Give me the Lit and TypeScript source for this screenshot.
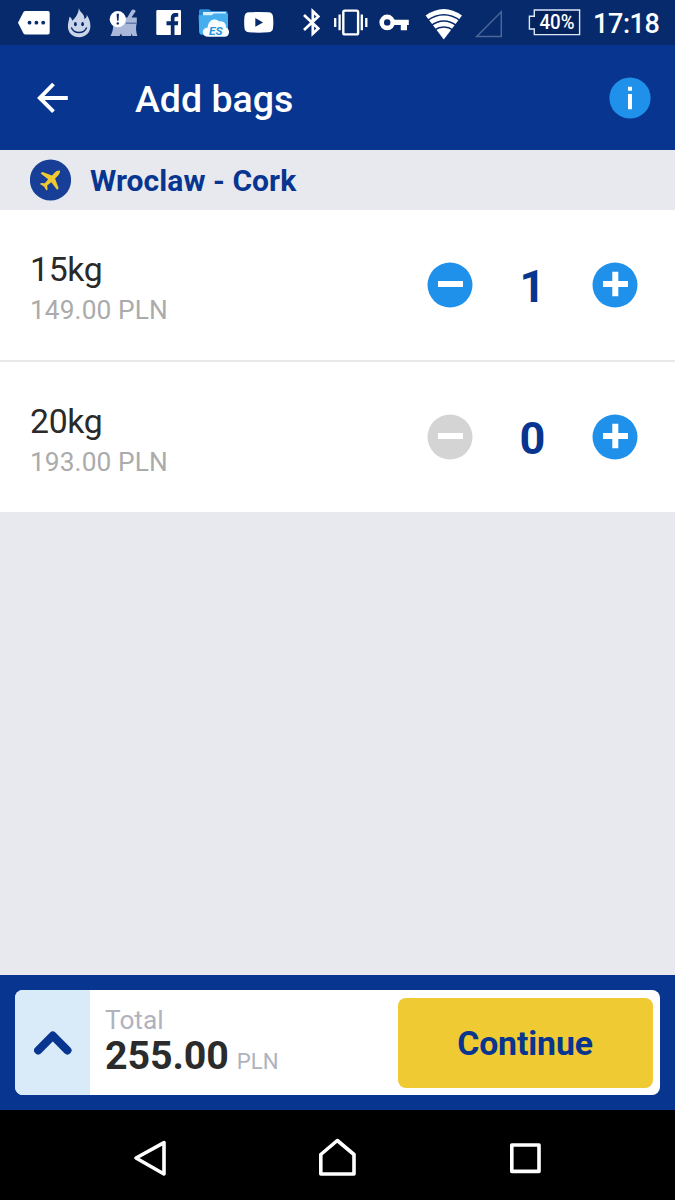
import { LitElement, html, svg, css } from "lit";
import { customElement, property, state } from "lit/decorators.js";

@customElement("status-bar")
class StatusBar extends LitElement {
  static styles = css`
    :host { display: flex; height: 45px; background: #062a6c; color: #fff; align-items: stretch; }
    svg { display: block; flex: none; height: 45px; }
    .es { font: italic 700 11.5px Roboto, sans-serif; fill: #2295dc; }
    .level { font: 500 20px Roboto, sans-serif; fill: #fff; }
    .clock { font: 500 27px/45px Roboto, sans-serif; padding-left: 3px; padding-top: 2px; height: 43px; white-space: nowrap; letter-spacing: -0.4px; }
  `;
  private cell(x: number, w: number, content: unknown) {
    return html`<svg width=${w} height="45" viewBox="${x} 0 ${w} 45">${content}</svg>`;
  }
  render() {
    return html`
      ${this.cell(0, 57, svg`
        <path d="M25.5 11 H48 Q49.7 11 49.7 12.7 V32.8 Q49.7 34.5 48 34.5 H25.5 Q24.3 34.5 23.5 33.4 L18 22.7 L23.5 12 Q24.3 11 25.5 11Z" fill="#fff"/>
        <circle cx="29.5" cy="22.7" r="1.9" fill="#062a6c"/><circle cx="36.4" cy="22.7" r="1.9" fill="#062a6c"/><circle cx="43.2" cy="22.7" r="1.9" fill="#062a6c"/>`)}
      ${this.cell(57, 45, svg`
        <path d="M78.8 8 C79.8 12.5 85 14 84.3 19 C86.5 18.3 86.7 16.8 86.8 14.8 C89 18.5 90.4 21.5 90.4 26 C90.4 32.5 85.7 37.2 79.2 37.2 C72.7 37.2 67.9 32.8 67.9 26.5 C67.9 22.5 69.2 20 69.5 16.8 C71.3 17.8 72 19.3 72.2 20.8 C75.7 17.5 78.7 13.5 78.8 8Z" fill="#cbd5ea"/>
        <ellipse cx="75.4" cy="24.2" rx="1.4" ry="2.1" fill="#062a6c"/><ellipse cx="82.6" cy="24.2" rx="1.4" ry="2.1" fill="#062a6c"/>
        <path d="M71.6 28 C74 34 84 34 86.4 28" fill="none" stroke="#062a6c" stroke-width="1.4" stroke-linecap="round"/>`)}
      ${this.cell(102, 44, svg`
        <path d="M110.5 36 C112.5 32 113 29.5 113.3 25 L114 17.5 H127.3 L131.7 9.9 Q133.6 8.9 135.8 11 L131.5 17.6 H136.8 V22.5 C135.5 27.5 136 32 137.4 36 H132.5 L131.5 33.4 L131 36 H122 L121 33.5 L119.5 36Z" fill="#a9b8d9"/>
        <path d="M126 23.2 H136.8" stroke="#5871a3" stroke-width="1.3"/>
        <circle cx="117.8" cy="19.2" r="8.1" fill="#fff"/>
        <path d="M116.6 13.8 h2.4 l-.5 7 h-1.4Z" fill="#062a6c"/><circle cx="117.8" cy="23.4" r="1.2" fill="#062a6c"/>`)}
      ${this.cell(146, 44, svg`
        <rect x="156.3" y="10" width="24.7" height="25" rx="1" fill="#fff"/>
        <path d="M170.8 35 V25.2 H166.5 V21.3 H170.8 V18.3 C170.8 14.6 172.6 13 175.4 13 H178.2 V16.7 H176.3 C174.9 16.7 174.5 17.4 174.5 18.6 V21.3 H178.3 L177.8 25.2 H174.5 V35Z" fill="#062a6c"/>`)}
      ${this.cell(190, 46, svg`
        <path d="M200.5 9.3 H209 L211.2 11 H225.5 Q227.6 11 227.6 13 V33 H202 Q199 33 199 30 V11 Q199 9.3 200.5 9.3Z" fill="#2b8ed8"/>
        <path d="M203 12 H226 V17 H203Z" fill="#d8effc"/>
        <path d="M198.6 15.2 H211.5 L214 13.6 H228 V32 Q228 34.7 225 34.7 H202 Q199.3 34.7 199.3 32Z" fill="#45aeee"/>
        <path d="M208.5 36.8 C200.8 36.8 201.3 27.4 207.7 27.4 C208.2 19.6 215 17.6 219.2 21.4 C223.2 20.4 226.5 23.6 226 27.4 C230.6 29 230 36.8 224.5 36.8Z" fill="#f8fcff"/>
        <text class="es" x="209" y="34.5" textLength="13.5" lengthAdjust="spacingAndGlyphs">ES</text>`)}
      ${this.cell(236, 46, svg`
        <path d="M249 12.3 Q258.7 11.5 268.5 12.3 Q272.6 12.5 273 16.5 Q273.7 22.4 273 28.3 Q272.6 32 268.5 32.3 Q258.7 33 249 32.3 Q244.9 32 244.5 28.3 Q243.8 22.4 244.5 16.5 Q244.9 12.5 249 12.3Z" fill="#fff"/>
        <path d="M255.3 18 L263 22.4 L255.3 26.8Z" fill="#062a6c"/>`)}
      ${this.cell(282, 46, svg`
        <path d="M304 15 L318.3 28.4 L312.8 33.6 V11.2 L318.3 16.6 L304 30" fill="none" stroke="#fff" stroke-width="2.7"/>`)}
      ${this.cell(328, 46, svg`
        <rect x="343.3" y="10.6" width="14.8" height="23.8" rx="1.5" fill="none" stroke="#fff" stroke-width="2.4"/>
        <path d="M339.6 14.5 V30.3 M335.2 18 V27 M361.8 14.5 V30.3 M366.3 18 V27" stroke="#fff" stroke-width="2.3"/>`)}
      ${this.cell(374, 42, svg`
        <circle cx="387.2" cy="22.4" r="5.5" fill="none" stroke="#fff" stroke-width="4.6"/>
        <path d="M393.5 19.8 H408.8 V25 H407 V30.2 H400.8 V25 H393.5Z" fill="#fff"/>`)}
      ${this.cell(416, 52, svg`
        <path d="M425.6 15.4 Q443.8 2.4 462 15.4 L443.8 39.5Z" fill="#fff"/>
        <path d="M427 20.8 Q443.8 8.5 460.6 20.8 M430.6 25.8 Q443.8 16 457 25.8 M434 30.4 Q443.8 23.7 453.6 30.4" fill="none" stroke="#062a6c" stroke-width="1.5"/>`)}
      ${this.cell(468, 42, svg`
        <path d="M501.3 11.8 V36.4 H476.7Z" fill="none" stroke="#4c6698" stroke-width="1.5"/>`)}
      ${this.cell(510, 80, svg`
        <path d="M534.3 10 H579.6 V34.6 H534.3 V29 H529.4 V16.3 H534.3Z" fill="#04235d" stroke="#dfe8f7" stroke-width="1.4"/>
        <text class="level" x="539.4" y="29.3" textLength="35" lengthAdjust="spacingAndGlyphs">40%</text>`)}
      <div class="clock">17:18</div>
    `;
  }
}

@customElement("bag-row")
class BagRow extends LitElement {
  @property() label = "";
  @property() price = "";
  @property({ type: Number }) count = 0;
  static styles = css`
    :host { display: flex; box-sizing: border-box; align-items: center; justify-content: space-between; height: 150px; padding: 0 37px 0 30px; background: #fff; font-family: Roboto, sans-serif; }
    .info { display: flex; flex-direction: column; padding-top: 9px; }
    .label { font-size: 33.75px; line-height: 40px; color: #2a2a2a; letter-spacing: -0.3px; }
    .price { font-size: 26.25px; line-height: 40px; color: #ababab; letter-spacing: 0.12px; }
    .stepper { display: flex; align-items: center; }
    .count { width: 119px; text-align: center; font-size: 45px; line-height: 50px; font-weight: 700; color: #073590; padding-top: 4px; }
    button { border: 0; padding: 0; background: none; display: block; }
    svg { display: block; }
    .on { fill: #2091eb; }
    .off { fill: #d4d4d4; }
    .mark { fill: #fff; }
  `;
  private step(d: number) {
    this.count = Math.max(0, this.count + d);
  }
  render() {
    return html`
      <div class="info"><span class="label">${this.label}</span><span class="price">${this.price}</span></div>
      <div class="stepper">
        <button aria-label="Remove" @click=${() => this.step(-1)}>
          <svg width="46" height="46" viewBox="0 0 46 46"><circle class=${this.count ? "on" : "off"} cx="23" cy="23" r="22.5"/><rect class="mark" x="11" y="19" width="25" height="6"/></svg>
        </button>
        <div class="count">${this.count}</div>
        <button aria-label="Add" @click=${() => this.step(1)}>
          <svg width="46" height="46" viewBox="0 0 46 46"><circle class="on" cx="23" cy="23" r="22.5"/><path class="mark" d="M11 19 h9.3 v-9.3 h6 v9.3 h9.7 v6 h-9.7 v9.2 h-6 v-9.2 h-9.3Z"/></svg>
        </button>
      </div>
    `;
  }
}

@customElement("app-root")
class AppRoot extends LitElement {
  @state() private bags = [
    { label: "15kg", price: "149.00 PLN", count: 1 },
    { label: "20kg", price: "193.00 PLN", count: 0 },
  ];
  static styles = css`
    :host { display: flex; flex-direction: column; width: 675px; height: 1200px; overflow: hidden; background: #e8e9ee; font-family: Roboto, sans-serif; }
    svg { display: block; flex: none; }
    .header { display: flex; align-items: center; height: 105px; background: #073590; padding: 0 24px 0 37px; }
    .title { flex: 1; margin-left: 67px; padding-top: 2px; color: #fff; font-size: 37.5px; line-height: 44px; font-weight: 500; }
    .route { display: flex; align-items: center; height: 60px; padding-left: 30px; gap: 19px; color: #073590; font-size: 30px; font-weight: 700; }
    .routename { padding-top: 1px; letter-spacing: 0.06px; }
    .bags { display: flex; flex-direction: column; gap: 2px; background: #e8e8ea; }
    .space { flex: 1; }
    .footer { background: #073590; height: 135px; box-sizing: border-box; padding: 15px; }
    .card { display: flex; height: 105px; border-radius: 8px; background: #fff; overflow: hidden; }
    .expand { width: 75px; background: #d9ebf9; display: flex; align-items: center; justify-content: center; }
    .total { flex: 1; display: flex; flex-direction: column; padding: 15px 0 0 15px; color: #b0b2be; }
    .caption { font-size: 26.25px; line-height: 31px; }
    .sum { display: flex; align-items: baseline; gap: 8px; font-size: 22.2px; line-height: 40px; white-space: nowrap; }
    .amount { font-size: 39.375px; font-weight: 700; color: #2b2b2b; letter-spacing: -0.1px; }
    .continue { width: 255px; height: 90px; margin: 7.5px; border: 0; border-radius: 8px; background: #f0ca32; color: #073590; font: 700 33.75px Roboto, sans-serif; letter-spacing: -0.1px; padding: 2px 0 0; }
    .nav { height: 84px; padding-top: 6px; background: #000; display: flex; align-items: center; justify-content: space-between; padding-left: 131px; padding-right: 131px; }
    .nav svg { fill: none; stroke: #fff; stroke-width: 3.6; stroke-linejoin: round; }
  `;
  render() {
    return html`
      <status-bar></status-bar>
      <div class="header">
        <svg width="31" height="32" viewBox="37 82 31 32"><path d="M67.8 98 H40 M53.5 84 L39.8 98 L53.5 111.6" fill="none" stroke="#fff" stroke-width="3.9"/></svg>
        <div class="title">Add bags</div>
        <svg width="42" height="42" viewBox="0 0 42 42"><circle cx="21" cy="21" r="20.6" fill="#2091eb"/><path d="M19 9.7 h4 v4 h-4Z M19 17 h4 v15.3 h-4Z" fill="#fff"/></svg>
      </div>
      <div class="route">
        <svg width="41" height="42" viewBox="30 159 41 42">
          <circle cx="50.5" cy="180" r="20.6" fill="#173f98"/>
          <path transform="translate(50.7 179.8) rotate(45)" d="M0 -13 C1.7 -12 2.2 -10 2.2 -8 V-4 L11.3 .2 Q12 1 11.6 2.6 L2.2 1.4 L1.6 6.6 L4.6 9 V10.6 L0 9.6 L-4.6 10.6 V9 L-1.6 6.6 L-2.2 1.4 L-11.6 2.6 Q-12 1 -11.3 .2 L-2.2 -4 V-8 C-2.2 -10 -1.7 -12 0 -13Z" fill="#f0ca32"/>
        </svg>
        <div class="routename">Wroclaw - Cork</div>
      </div>
      <div class="bags">
        ${this.bags.map((b) => html`<bag-row .label=${b.label} .price=${b.price} .count=${b.count}></bag-row>`)}
      </div>
      <div class="space"></div>
      <div class="footer">
        <div class="card">
          <div class="expand"><svg width="38" height="26" viewBox="0 0 38 26"><path d="M4.2 20.3 L18.8 5.7 L33.4 20.3" fill="none" stroke="#073590" stroke-width="8.2" stroke-linecap="round" stroke-linejoin="round"/></svg></div>
          <div class="total">
            <div class="caption">Total</div>
            <div class="sum"><span class="amount">255.00</span><span>PLN</span></div>
          </div>
          <button class="continue">Continue</button>
        </div>
      </div>
      <div class="nav">
        <svg width="38" height="40" viewBox="131 1138 38 40"><path d="M136 1158 L164 1142.7 V1174Z"/></svg>
        <svg width="40" height="40" viewBox="318 1138 40 40"><path d="M320.8 1174 V1154.5 L337.3 1140.5 L354 1154.5 V1174Z"/></svg>
        <svg width="38" height="40" viewBox="506 1138 38 40"><path d="M511.8 1145 H539 V1171.4 H511.8Z"/></svg>
      </div>
    `;
  }
}
